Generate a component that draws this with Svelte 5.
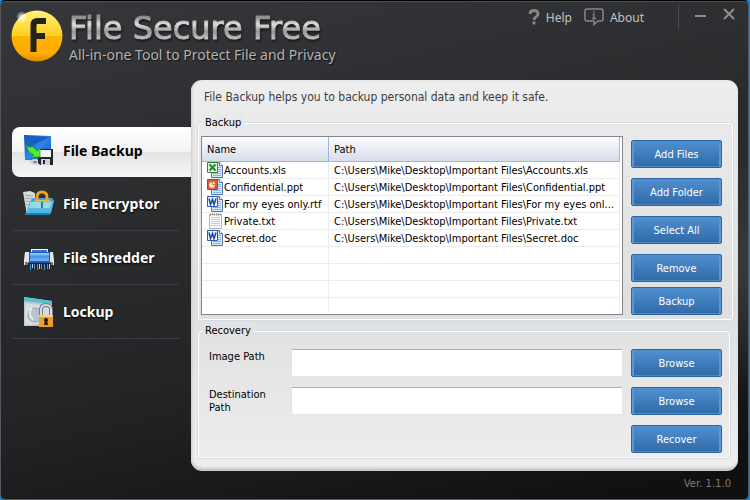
<script>
  const tools = [
    { id: 'backup', name: 'File Backup' },
    { id: 'encryptor', name: 'File Encryptor' },
    { id: 'shredder', name: 'File Shredder' },
    { id: 'lockup', name: 'Lockup' }
  ];
  const folder = 'C:\\Users\\Mike\\Desktop\\Important Files\\';
  const files = [
    { name: 'Accounts.xls', kind: 'xls' },
    { name: 'Confidential.ppt', kind: 'ppt' },
    { name: 'For my eyes only.rtf', shown: 'For my eyes onl...', kind: 'doc' },
    { name: 'Private.txt', kind: 'txt' },
    { name: 'Secret.doc', kind: 'doc' }
  ];
  const emptyRows = [0, 1, 2, 3];
  const listActions = ['Add Files', 'Add Folder', 'Select All', 'Remove'];
  let active = $state('backup');
  let imagePath = $state('');
  let destinationPath = $state('');
</script>

{#snippet toolIcon(id)}
  <svg class="tool-icon" width="32" height="32" viewBox="0 0 32 32" aria-hidden="true">
    {#if id === 'backup'}
      <defs>
        <linearGradient id="scr" x1="0" y1="0" x2="1" y2="1">
          <stop offset="0" stop-color="#0b4fa8" /><stop offset=".5" stop-color="#2f86e8" /><stop offset="1" stop-color="#0a4cae" />
        </linearGradient>
      </defs>
      <path d="M1 1 28 2v20l-3 5-23-1z" fill="url(#scr)" />
      <path d="M2 2 27 3 6 13z" fill="#1a60c4" />
      <ellipse cx="12" cy="28" rx="5" ry="3" fill="#cfd6de" /><ellipse cx="12" cy="28" rx="2" ry="1" fill="#6d7780" />
      <path d="M15 15h15v16H17l-2-2z" fill="#24262c" />
      <path d="M17 16h11v7H17z" fill="#f1f3f8" /><path d="M18 25h9v6h-9z" fill="#cfd2da" /><path d="M20 26h2v4h-2z" fill="#25272c" />
      <path d="M3 11l3 2h4l4 4 3-3v9H8l3-2-5-3z" fill="#4cf02e" stroke="#1c9a16" stroke-width=".7" />
    {:else if id === 'encryptor'}
      <path d="M0 4l7-1 5 2v20l-8 2z" fill="#d9dadc" /><path d="M2 7l8 1M2 10l8 1M3 13l7 1M3 16l6 1" stroke="#9fa2a6" />
      <path d="M8 12l2-2h19l2 3-3 12H5z" fill="#42a6d8" />
      <path d="M14 14V9q0-5 5-5t5 5v5" fill="none" stroke="#f0a21c" stroke-width="3" />
      <path d="M12 12h15v9H12z" fill="#e9bd48" />
      <path d="M7 13h24l-4 14H2z" fill="#52bce9" fill-opacity=".82" /><path d="M8 14h21l-2 6H6z" fill="#b6e9ed" fill-opacity=".65" />
      <path d="M19 14v6" stroke="#2681a7" stroke-width="2" /><path d="M3 26h24" stroke="#187eb9" stroke-width="2" />
    {:else if id === 'shredder'}
      <defs>
        <linearGradient id="shr" x1="0" y1="0" x2="0" y2="1">
          <stop offset="0" stop-color="#9fd4ff" /><stop offset=".45" stop-color="#4a91e8" /><stop offset="1" stop-color="#76b5f8" />
        </linearGradient>
      </defs>
      <path d="M8 7h17v5H8z" fill="#f6faff" /><path d="M9 9h15" stroke="#3477cf" stroke-width="2" />
      <path d="M2 10h28l1 8v5H1v-5z" fill="#e3e5e8" /><path d="M2 20h28v3H2z" fill="#77797c" />
      <path d="M6 10h21v11H6z" fill="#1e5ab0" /><path d="M7 11h19v8H7z" fill="url(#shr)" />
      <path d="M5 21h23v2H5z" fill="#202226" />
      <path d="M7.500 22v6M11.500 22v5M14.500 22v6M18.500 22v5M21.500 22v6M24.500 22v5" stroke="#3f8ee0" />
      <path d="M9.500 22v4M16.500 22v5M26.500 22v5" stroke="#b5ceec" />
    {:else}
      <path d="M1 1l28 4v25L1 30z" fill="#b9c7cc" /><path d="M1 1l28 4v3L1 5z" fill="#54c2cf" />
      <path d="M2 7l26 3v18L2 29z" fill="#d5dde1" />
      <circle cx="12" cy="19" r="7" fill="#b8c4ca" stroke="#96a6ad" /><path d="M9 12q-5 5 1 12" fill="none" stroke="#e8edf0" stroke-width="2" />
      <path d="M18 20v-6q0-5 5-5t5 5v6" fill="none" stroke="#74797d" stroke-width="4" />
      <path d="M18 20v-6q0-5 5-5t5 5v6" fill="none" stroke="#d9dcde" stroke-width="2" />
      <path d="M16 19h14v12H16z" fill="#f09a2c" /><path d="M16 19h14v2H16z" fill="#ffd07c" />
      <circle cx="23" cy="24" r="2" fill="#271a10" /><path d="M22 24h2l1 5h-4z" fill="#271a10" />
    {/if}
  </svg>
{/snippet}

{#snippet fileIcon(kind)}
  <svg class="file-icon" width="16" height="16" viewBox="0 0 16 16" aria-hidden="true">
    {#if kind === 'txt'}
      <path d="M2.500 1.500h12v14h-12z" fill="#fafafa" stroke="#b3b3b3" />
      <path d="M3 1.500h11" stroke="#888" stroke-width="2" stroke-dasharray="1 1" />
      <path d="M4 4.500h9M4 6.500h9M4 8.500h9M4 10.500h9M4 12.500h9" stroke="#c9cccf" />
    {:else}
      <path d="M4.500.5h8l3 3v12h-11z" fill="#dce8f8" stroke="#4f75ac" /><path d="M12.500.5v3h3" fill="#fff" stroke="#4f75ac" />
      <path d="M6 5.500h8M6 7.500h8M6 9.500h8M6 11.500h8M6 13.500h8" stroke="#8fb0dc" />
      {#if kind === 'xls'}
        <path d="M.5.5h10v10H.5z" fill="#e5f3df" stroke="#398039" /><path d="M2.500 2.500l6 6M8.500 2.500l-6 6" stroke="#25842b" stroke-width="2" />
      {:else if kind === 'ppt'}
        <path d="M.5.5h10v10H.5z" fill="#d95a35" stroke="#b3421f" /><circle cx="5" cy="6" r="3" fill="#fbe0d2" /><path d="M5.500 5.500v-3.500q3 0 3 3.500z" fill="#fff" stroke="#c4471f" stroke-width=".7" />
      {:else}
        <path d="M.5.5h10v10H.5z" fill="#f1f6ff" stroke="#2b5cae" /><path d="M2 2.500l1.500 6 2-5 1.500 5 2-6" fill="none" stroke="#1d4fae" stroke-width="1.600" />
      {/if}
    {/if}
  </svg>
{/snippet}

<div class="window">
  <header>
    <svg class="logo" width="54" height="54" viewBox="0 0 54 54" aria-hidden="true">
      <defs>
        <linearGradient id="gold" x1="0" y1="0" x2="0" y2="1">
          <stop offset="0" stop-color="#fff27a" /><stop offset=".5" stop-color="#ffcf22" />
          <stop offset=".51" stop-color="#ffb400" /><stop offset=".85" stop-color="#ffab00" /><stop offset="1" stop-color="#d98a08" />
        </linearGradient>
        <radialGradient id="glint"><stop offset="0" stop-color="#fff" /><stop offset="1" stop-color="#fff" stop-opacity="0" /></radialGradient>
      </defs>
      <circle cx="27" cy="27" r="25.500" fill="url(#gold)" />
      <circle cx="12" cy="8" r="6" fill="url(#glint)" />
      <path d="M23.500 43V16q0-4 4-4H36M23.500 27H35" fill="none" stroke="#25221c" stroke-width="6" />
    </svg>
    <div class="brand">
      <h1>File Secure Free</h1>
      <p>All-in-one Tool to Protect File and Privacy</p>
    </div>
    <div class="links">
      <a href="#help">
        <svg width="12" height="16" viewBox="0 0 12 16" aria-hidden="true"><path d="M2 5q0-3.500 4-3.500t4 3.500q0 2-2 3T6 11" fill="none" stroke="#858688" stroke-width="2.800" /><path d="M4.500 12.500h3v3h-3z" fill="#858688" /></svg>
        Help
      </a>
      <a href="#about">
        <svg width="20" height="18" viewBox="0 0 20 18" aria-hidden="true"><path d="M3 1h14q2 0 2 2v8q0 2-2 2h-3l-4 3.500V13H3q-2 0-2-2V3q0-2 2-2z" fill="none" stroke="#858688" stroke-width="1.500" /><path d="M10 3v2M8.500 6.500H10V10M8 10.500h4" fill="none" stroke="#858688" stroke-width="1.300" /></svg>
        About
      </a>
    </div>
    <div class="controls">
      <button aria-label="Minimize"><svg width="12" height="12" viewBox="0 0 12 12"><path d="M0 8h11" stroke="#8d8e90" stroke-width="2" /></svg></button>
      <button aria-label="Close"><svg width="12" height="12" viewBox="0 0 12 12"><path d="M1 1l10 10M11 1L1 11" stroke="#8d8e90" stroke-width="2" /></svg></button>
    </div>
  </header>

  <div class="body">
    <nav>
      {#each tools as tool}
        <button class="tool" class:active={active === tool.id} onclick={() => (active = tool.id)}>
          {@render toolIcon(tool.id)}
          <span>{tool.name}</span>
        </button>
      {/each}
    </nav>

    <main>
      <p class="intro">File Backup helps you to backup personal data and keep it safe.</p>

      <fieldset class="backup">
        <legend>Backup</legend>
        <div class="backup-row">
          <div class="list">
            <table>
              <thead>
                <tr><th class="name">Name</th><th>Path</th></tr>
              </thead>
              <tbody>
                {#each files as file}
                  <tr>
                    <td><div class="file">{@render fileIcon(file.kind)}<span>{file.name}</span></div></td>
                    <td title={folder + file.name}><div class="path">{folder}{file.shown ?? file.name}</div></td>
                  </tr>
                {/each}
                {#each emptyRows as row (row)}
                  <tr><td></td><td></td></tr>
                {/each}
              </tbody>
            </table>
          </div>
          <div class="actions">
            <div class="list-actions">
              {#each listActions as label}
                <button class="blue">{label}</button>
              {/each}
            </div>
            <button class="blue">Backup</button>
          </div>
        </div>
      </fieldset>

      <fieldset class="recovery">
        <legend>Recovery</legend>
        <div class="field">
          <label for="image-path">Image Path</label>
          <input id="image-path" type="text" bind:value={imagePath} />
          <button class="blue">Browse</button>
        </div>
        <div class="field">
          <label for="destination-path">Destination Path</label>
          <input id="destination-path" type="text" bind:value={destinationPath} />
          <button class="blue">Browse</button>
        </div>
        <div class="field end">
          <button class="blue">Recover</button>
        </div>
      </fieldset>
    </main>
  </div>

  <footer>Ver. 1.1.0</footer>
</div>

<style>
  :global(body) {
    background: #1583dc;
  }
  .window {
    box-sizing: border-box;
    min-height: calc(100vh - 1px);
    margin-right: 1px;
    display: flex;
    flex-direction: column;
    border: 1px solid #56575a;
    border-top-color: #000;
    border-radius: 5px;
    box-shadow: inset 0 1px #505154;
    background:
      radial-gradient(ellipse 160px 130px at 100% 52%, #3a3a3a, transparent),
      linear-gradient(167deg, #36373a 0%, #2a2b2d 40%, #222325 65%, #101010 95%);
    font-family: 'DejaVu Sans Condensed', 'Noto Sans', sans-serif;
    font-size: 11px;
    color: #000;
  }
  h1,
  p {
    margin: 0;
  }
  button {
    font: inherit;
    cursor: pointer;
  }
  header {
    display: flex;
    height: 79px;
    padding-left: 9px;
    font-family: 'Noto Sans', sans-serif;
  }
  .logo {
    margin-top: 8px;
  }
  .brand {
    flex: 1;
    margin-left: 5px;
    padding-top: 9px;
    white-space: nowrap;
  }
  h1 {
    font: 32px/37px 'DejaVu Sans', sans-serif;
    background: linear-gradient(#909090 20%, #e0e0e0 38%, #999 58%, #c8c8c8 82%);
    -webkit-background-clip: text;
    background-clip: text;
    color: transparent;
    -webkit-text-stroke: 1px transparent;
    filter: drop-shadow(1px 2px 1px #1a1a1c);
  }
  .brand p {
    font-size: 14px;
    line-height: 16px;
    color: #b2b2b3;
    text-shadow: 1px 1px 1px #111;
  }
  .links {
    display: flex;
    gap: 12px;
    height: 32px;
    align-items: center;
  }
  .links a {
    display: flex;
    align-items: center;
    gap: 6px;
    font-size: 12px;
    color: #c2c2c2;
    text-decoration: none;
  }
  .controls {
    display: flex;
    gap: 16px;
    height: 24px;
    margin: 4px 13px 0 34px;
    padding-left: 16px;
    border-left: 1px solid #4c4d50;
  }
  .controls button {
    width: 12px;
    height: 20px;
    padding: 0;
    border: 0;
    background: none;
  }
  .body {
    flex: 1;
    display: flex;
    padding-right: 10px;
  }
  nav {
    width: 179px;
    margin-left: 11px;
    padding-top: 47px;
    flex: none;
    font-family: 'Noto Sans', sans-serif;
  }
  .tool {
    box-sizing: border-box;
    display: flex;
    align-items: center;
    gap: 8px;
    width: 167px;
    height: 54px;
    margin: 0;
    padding: 0 0 0 11px;
    border: 0;
    border-bottom: 1px solid #3d3e41;
    background: none;
    color: #fff;
    font-size: 14px;
    font-weight: bold;
    text-align: left;
    text-shadow: 0 1px 2px #000;
  }
  .tool.active {
    width: 100%;
    height: 50px;
    padding-bottom: 4px;
    border: 0;
    border-radius: 8px 0 0 8px;
    background: linear-gradient(#fff, #f3f3f3 49%, #e4e4e4 51%, #f7f7f7);
    color: #000;
    text-shadow: none;
  }
  main {
    flex: 1;
    min-width: 0;
    box-sizing: border-box;
    padding: 0 4px 10px 6px;
    border-bottom: 2px solid #c9c9c9;
    border-radius: 11px;
    background: linear-gradient(#eee, #e8e8e8 20%, #dfdfdf 58%, #eee);
    box-shadow: inset 1px -1px 3px #c8c8c8;
  }
  .intro {
    font-size: 12px;
    line-height: 34px;
    padding-left: 7px;
    color: #3c3c44;
  }
  fieldset {
    min-width: 0;
    margin: 0;
    border: 1px solid #d3dde6;
    border-radius: 3px;
    box-shadow: inset 0 0 0 1px #fff;
  }
  legend {
    margin-left: 1px;
    padding: 1px 3px 0;
    line-height: 15px;
    background: #e9e9e9;
  }
  .backup {
    padding: 6px 11px 5px 3px;
  }
  .backup-row {
    display: flex;
    gap: 8px;
  }
  .list {
    flex: 1;
    min-width: 0;
    box-sizing: border-box;
    border: 1px solid #82838f;
    background: #fff;
    padding-right: 2px;
  }
  table {
    width: 100%;
    table-layout: fixed;
    border-collapse: separate;
    border-spacing: 0;
  }
  th {
    box-sizing: border-box;
    height: 25px;
    padding: 1px 5px 0;
    border-right: 1px solid #9db9d6;
    border-bottom: 1px solid #9db9d6;
    background: linear-gradient(#fdfdfe, #eaeef5 50%, #d6deeb);
    font-weight: normal;
    text-align: left;
  }
  .name {
    width: 127px;
  }
  td {
    box-sizing: border-box;
    height: 17px;
    padding: 0 5px;
    border-right: 1px solid #ececec;
    border-bottom: 1px solid #ececec;
    line-height: 16px;
    white-space: nowrap;
    overflow: hidden;
    text-overflow: ellipsis;
  }
  tbody tr:last-child td {
    height: 15px;
    border-bottom: 0;
  }
  .file {
    display: flex;
    gap: 1px;
  }
  .file span,
  .path {
    height: 15px;
    padding-top: 1px;
  }
  .file-icon {
    flex: none;
  }
  .actions {
    display: flex;
    flex-direction: column;
    gap: 5px;
    padding-top: 4px;
  }
  .list-actions {
    display: flex;
    flex-direction: column;
    gap: 10px;
  }
  .blue {
    width: 91px;
    height: 28px;
    flex: none;
    padding: 1px 0 0;
    border: 1px solid #2c65a4;
    border-radius: 2px;
    background: linear-gradient(#5090d0, #2f69a8);
    box-shadow:
      inset 2px 0 #5c97d1,
      inset -2px 0 #5c97d1,
      inset 0 -1px #4c85c0;
    color: #fff;
  }
  .recovery {
    margin: 1px 3px 0 0;
    padding: 11px 8px 5px 3px;
  }
  .recovery legend {
    background: #e2e2e2;
  }
  .field {
    display: flex;
    align-items: flex-start;
    gap: 8px;
    margin-bottom: 10px;
    padding-left: 8px;
  }
  .field label {
    width: 74px;
    padding-top: 1px;
    line-height: 13px;
  }
  .field input {
    flex: 1;
    min-width: 0;
    box-sizing: border-box;
    height: 28px;
    border: 1px solid #e0e3e8;
    border-top-color: #abadb3;
    border-radius: 2px;
    background: #fff;
    font: inherit;
  }
  .field.end {
    justify-content: flex-end;
    margin-bottom: 0;
  }
  footer {
    padding: 0 17px 0 0;
    height: 28px;
    font: 10px/26px 'DejaVu Sans', sans-serif;
    color: #7e7c76;
    text-align: right;
  }
</style>
